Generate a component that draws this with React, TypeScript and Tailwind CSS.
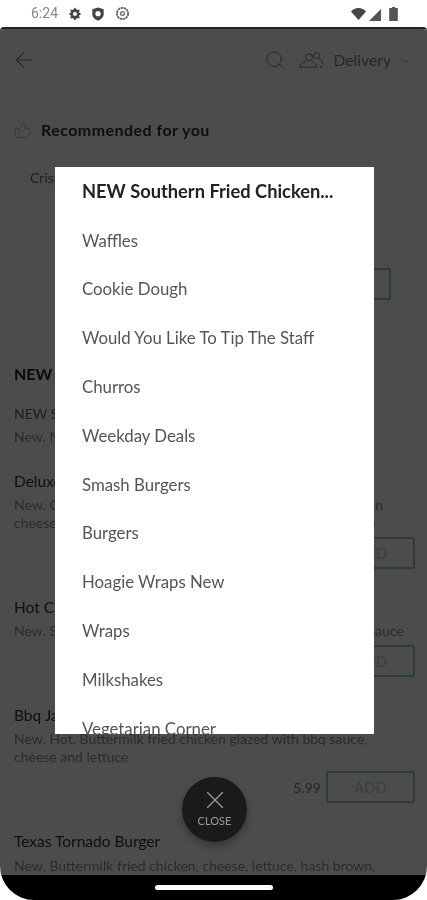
import { ArrowLeft, ChevronDown, Search, ThumbsUp, X } from 'lucide-react'

const categories = [
  'Waffles',
  'Cookie Dough',
  'Would You Like To Tip The Staff',
  'Churros',
  'Weekday Deals',
  'Smash Burgers',
  'Burgers',
  'Hoagie Wraps New',
  'Wraps',
  'Milkshakes',
  'Vegetarian Corner',
]

const burgers = [
  {
    name: 'Deluxe Southern Burger',
    lines: ['New. Crispy buttermilk fried chicken served in a brioche bun', 'cheese, hash brown, gherkin, red onion, tomato and lettuce'],
    price: '6.99',
  },
  {
    name: 'Hot Chick Burger',
    lines: ['New. Spicy buttermilk fried chicken, jalapeno, cheese, hot sauce'],
    price: '5.99',
  },
  {
    name: 'Bbq Jack Burger',
    lines: ['New. Hot. Buttermilk fried chicken glazed with bbq sauce,', 'cheese and lettuce'],
    price: '5.99',
  },
]

function StatusIcons() {
  return (
    <div className="flex h-[27px] shrink-0 items-center justify-between pl-[31px] pr-[29px]">
      <div className="flex items-center">
        <span className="w-[37px] font-['Roboto',sans-serif] text-[14px] text-[#888888]">6:24</span>
        <svg viewBox="0 0 16 16" className="h-[14px] w-[14px] text-[#444444]" fill="currentColor">
          <path d="M8 0.5 10 3.2 13.4 3.2 12.6 6.4 15.2 8 12.6 9.6 13.4 12.8 10 12.8 8 15.5 6 12.8 2.6 12.8 3.4 9.6 0.8 8 3.4 6.4 2.6 3.2 6 3.2Z M8 5.6A2.4 2.4 0 1 0 8 10.4 2.4 2.4 0 1 0 8 5.6Z" fillRule="evenodd" />
        </svg>
        <svg viewBox="0 0 16 16" className="ml-[9px] h-[14px] w-[14px] text-[#444444]" fill="currentColor">
          <path d="M8 0.5 14.5 2.6V8C14.5 11.6 11.6 14.4 8 15.5 4.4 14.4 1.5 11.6 1.5 8V2.6Z M8 4.6A3 3 0 1 0 8 10.6 3 3 0 1 0 8 4.6Z" fillRule="evenodd" />
        </svg>
        <svg viewBox="0 0 16 16" className="ml-[10px] h-[15px] w-[15px] text-[#666666]" fill="none" stroke="currentColor" strokeWidth="2">
          <circle cx="8" cy="8" r="6" strokeDasharray="2.6 0.6" />
          <circle cx="8" cy="8" r="2" strokeWidth="1.4" />
        </svg>
      </div>
      <div className="flex items-center">
        <svg viewBox="0 0 14 11" className="h-[12px] w-[15px] text-[#444444]" fill="currentColor">
          <path d="M0 3.2C1.8 1.2 4.2 0 7 0S12.2 1.2 14 3.2L7 11Z" />
        </svg>
        <svg viewBox="0 0 12 12" className="ml-[3px] mt-[2px] h-[12px] w-[12px] text-[#555555]" fill="currentColor">
          <path d="M12 0V12H0Z" />
        </svg>
        <svg viewBox="0 0 8 13" className="ml-[8px] h-[14px] w-[9px] text-[#555555]" fill="currentColor">
          <path d="M2.5 0H5.5V1H7.5A.5.5 0 0 1 8 1.5V12.5A.5.5 0 0 1 7.5 13H.5A.5.5 0 0 1 0 12.5V1.5A.5.5 0 0 1 .5 1H2.5Z" />
        </svg>
      </div>
    </div>
  )
}

function PageHeader() {
  return (
    <div className="flex h-[62px] items-center pl-[11px] pr-[15px] text-[#808080]">
      <ArrowLeft className="h-[26px] w-[26px]" strokeWidth={1} />
      <Search className="ml-auto h-[22px] w-[22px]" strokeWidth={1} />
      <svg viewBox="0 0 24 16" className="ml-[13px] h-[16px] w-[24px]" fill="none" stroke="currentColor" strokeWidth="1">
        <circle cx="10" cy="5.5" r="3.5" />
        <path d="M7 9C5 10.5 .8 11 .8 15.2H17.5C17.5 11 15 10.5 13 9" />
        <circle cx="17.5" cy="3.5" r="3" />
        <path d="M20 6.5C22 8 23.5 9 23.5 12" />
        <circle cx="22" cy="15" r=".7" />
      </svg>
      <span className="ml-[10px] mt-[2px] text-[15.7px] leading-none">Delivery</span>
      <ChevronDown className="ml-[7px] mt-[2px] h-[14px] w-[14px]" strokeWidth={1.3} />
    </div>
  )
}

function MenuItem({ name, lines, price }: { name: string; lines: string[]; price: string }) {
  return (
    <div className="pb-[28px]">
      <div className="h-[20px] text-[15.5px] leading-[20px] text-[#333333]">{name}</div>
      <div className="mt-[5px] text-[14px] leading-[18px] text-[#909090]">
        {lines.map((line) => (
          <div key={line} className="whitespace-nowrap">{line}</div>
        ))}
      </div>
      <div className="mt-[5px] flex items-center justify-end">
        <span className="mr-[5px] text-[14px] text-[#808080]">{price}</span>
        <button className="h-[32px] w-[89px] rounded-[2px] border-2 border-[#90c8ac] text-[15px] text-[#b0dcc6]">ADD</button>
      </div>
    </div>
  )
}

export default function App() {
  return (
    <div className="relative flex h-[900px] w-[427px] flex-col overflow-hidden bg-white font-['Lato',sans-serif] blur-[0.5px]">
      <StatusIcons />

      {/* Page behind the dialog */}
      <div className="relative flex min-h-0 flex-1 flex-col overflow-hidden rounded-t-[4px] rounded-b-[34px] border-t-2 border-[#222222] bg-white">
        <div className="relative min-h-0 flex-1 overflow-hidden">
          <PageHeader />

          <div className="mt-[25px] flex h-[28px] items-center pl-[14px]">
            <ThumbsUp className="h-[18px] w-[18px] text-[#b0b0b0]" strokeWidth={1} />
            <span className="ml-[9px] text-[16px] font-bold tracking-[0.45px] text-[#333333]">Recommended for you</span>
          </div>

          <div className="mt-[16px] h-[155px] px-[14px]">
            <div className="h-full pl-[16px] pr-[22px] pt-[9px]">
              <div className="text-[14px] leading-[18px] text-[#666666]">Crispy Chicken Burger</div>
              <div className="mt-[81px] flex justify-end">
                <button className="h-[32px] w-[80px] rounded-[2px] border-2 border-[#90c8ac] text-[15px] text-[#b0dcc6]">ADD</button>
              </div>
            </div>
          </div>

          <div className="mt-[47px] pl-[14px] pr-[12px]">
            <div className="h-[24px] text-[16px] font-bold leading-[24px] text-[#222222]">NEW Southern Fried Chicken</div>
            <div className="mt-[19px] text-[14px] leading-[18px] text-[#666666]">NEW Southern Fried Chicken</div>
            <div className="mt-[5px] text-[14px] leading-[18px] text-[#909090]">New. Now available</div>
            <div className="mt-[25px]">
              {burgers.map((item) => (
                <MenuItem key={item.name} {...item} />
              ))}
              <div className="h-[20px] text-[15.5px] leading-[20px] text-[#333333]">Texas Tornado Burger</div>
              <div className="mt-[6px] whitespace-nowrap text-[14px] leading-[18px] text-[#909090]">
                New. Buttermilk fried chicken, cheese, lettuce, hash brown,
              </div>
            </div>
          </div>

          {/* Scrim */}
          <div className="absolute inset-0 bg-black/70" />
        </div>

        <div className="flex h-[25px] shrink-0 items-center justify-center bg-black">
          <div className="h-[5px] w-[118px] rounded-full bg-white" />
        </div>
      </div>

      {/* Category dialog */}
      <div className="absolute left-[55px] top-[167px] h-[567px] w-[319px] overflow-hidden bg-white pl-[27px]">
        <div className="flex h-[48.8px] items-center text-[18.3px] font-bold text-[#222222]">NEW Southern Fried Chicken...</div>
        {categories.map((name) => (
          <div key={name} className="flex h-[48.8px] items-center text-[16.8px] text-[#555555]">{name}</div>
        ))}
      </div>

      {/* Close button */}
      <button className="absolute left-[182px] top-[777px] flex h-[65px] w-[65px] flex-col items-center rounded-full bg-[#1a1a1a] pt-[8px] text-[#9a9a9a] shadow-[0_4px_8px_rgba(0,0,0,0.3)]">
        <X className="h-[30px] w-[30px]" strokeWidth={1} />
        <span className="mt-[-1px] text-[11px] leading-[14px]">CLOSE</span>
      </button>
    </div>
  )
}
